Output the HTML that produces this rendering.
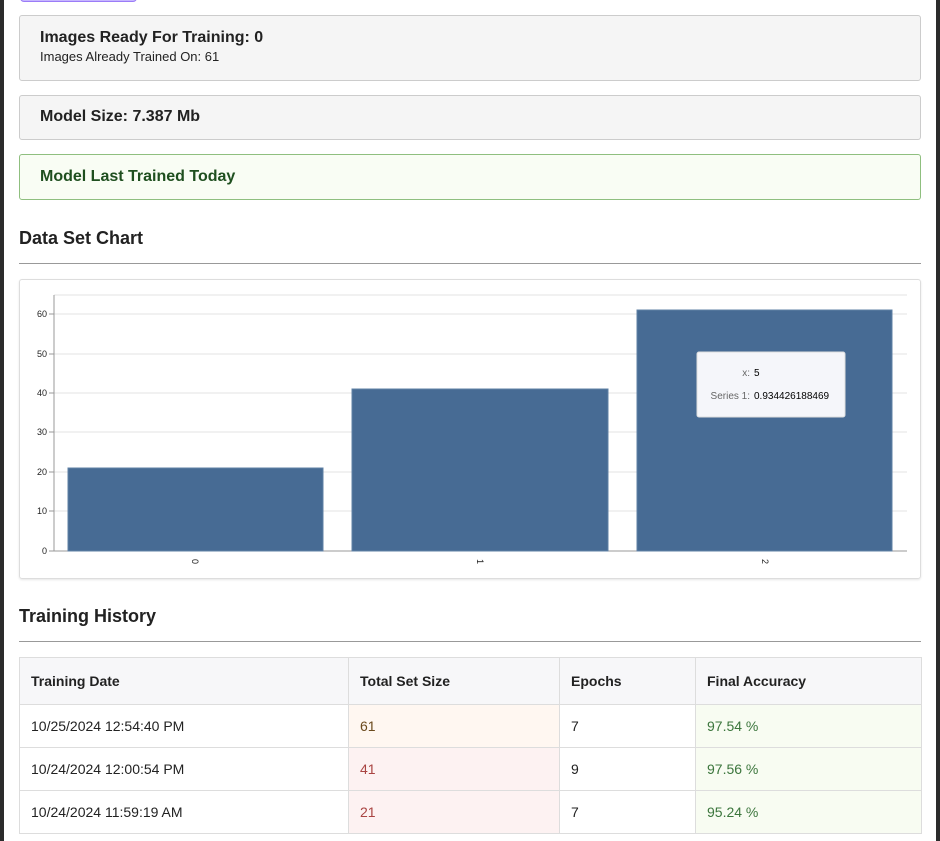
<!DOCTYPE html>
<html><head><meta charset="utf-8"><style>
*{box-sizing:border-box;margin:0;padding:0}
body{width:940px;height:841px;overflow:hidden;background:#fff;font-family:"Liberation Sans",Arial,sans-serif;color:#222;position:relative}
.edge{position:absolute;top:0;bottom:0;width:4px;background:#2b2b2b}
.btn{position:absolute;left:20px;top:-6px;width:117px;height:8px;border:1px solid #9b7cf7;border-radius:4px;background:#c6b6ff}
.panel{position:absolute;left:19px;width:902px;background:#f5f5f5;border:1px solid #ccc;border-radius:3px;padding-left:20px}
.panel b{font-size:16px;color:#222}
h3{position:absolute;left:19px;font-size:18px;font-weight:bold;color:#222}
.hr{position:absolute;left:19px;width:902px;height:1px;background:#999}
.card{position:absolute;left:19px;top:279px;width:902px;height:300px;border:1px solid #ddd;border-radius:3px;box-shadow:0 1px 2px rgba(0,0,0,.1)}
table{position:absolute;left:19px;top:657px;width:903px;border-collapse:collapse;font-size:14px}
td,th{border:1px solid #ddd;padding:0 11px;text-align:left}
th{height:47px;background:#f7f7f9;font-weight:bold}
td{height:43px}
</style></head><body>
<div class="edge" style="left:0"></div><div class="edge" style="right:0"></div>
<div class="btn"></div>
<div class="panel" style="top:15px;height:66px;padding-top:13px"><b>Images Ready For Training: 0</b><div style="font-size:13px;margin-top:2px">Images Already Trained On: 61</div></div>
<div class="panel" style="top:95px;height:45px;padding-top:12px"><b>Model Size: 7.387 Mb</b></div>
<div class="panel" style="top:154px;height:46px;padding-top:13px;background:#f9fdf4;border-color:#8fbf7f"><b style="color:#1f4f1f">Model Last Trained Today</b></div>
<h3 style="top:228px">Data Set Chart</h3>
<div class="hr" style="top:263px"></div>
<div class="card"></div>
<svg style="position:absolute;left:0;top:0" width="940" height="600" font-family="Liberation Sans,Arial,sans-serif" font-size="9">
<g stroke="#e3e3e3">
<line x1="54" x2="907" y1="314" y2="314"/><line x1="54" x2="907" y1="354" y2="354"/><line x1="54" x2="907" y1="393" y2="393"/><line x1="54" x2="907" y1="432" y2="432"/><line x1="54" x2="907" y1="472" y2="472"/><line x1="54" x2="907" y1="511" y2="511"/><line x1="54" x2="907" y1="295" y2="295"/>
</g>
<line x1="54" x2="54" y1="295" y2="551" stroke="#999"/>
<line x1="54" x2="907" y1="551" y2="551" stroke="#999"/>
<g fill="#476b94" stroke="#5f80a5">
<rect x="68" y="468" width="255" height="83"/><rect x="352" y="389" width="256" height="162"/><rect x="637" y="310" width="255" height="241"/>
</g>
<g fill="#222" text-anchor="end">
<text x="47" y="317">60</text><text x="47" y="357">50</text><text x="47" y="396">40</text><text x="47" y="435">30</text><text x="47" y="475">20</text><text x="47" y="514">10</text><text x="47" y="554">0</text>
</g>
<g stroke="#999"><line x1="49" x2="54" y1="314" y2="314"/><line x1="49" x2="54" y1="354" y2="354"/><line x1="49" x2="54" y1="393" y2="393"/><line x1="49" x2="54" y1="432" y2="432"/><line x1="49" x2="54" y1="472" y2="472"/><line x1="49" x2="54" y1="511" y2="511"/><line x1="49" x2="54" y1="551" y2="551"/></g>
<g fill="#222"><text transform="translate(192,559) rotate(90)">0</text><text transform="translate(477,559) rotate(90)">1</text><text transform="translate(762,559) rotate(90)">2</text></g>
<rect x="697" y="352" width="148" height="65" rx="2" fill="#f5f6fa" stroke="#ddd"/>
<text x="750" y="376" fill="#666" font-size="10" text-anchor="end">x:</text><text x="754" y="376" fill="#000" font-size="10">5</text>
<text x="750" y="399" fill="#666" font-size="10" text-anchor="end">Series 1:</text><text x="754" y="399" fill="#000" font-size="10">0.934426188469</text>
</svg>
<h3 style="top:606px">Training History</h3>
<div class="hr" style="top:641px"></div>
<table>
<tr><th style="width:329px">Training Date</th><th style="width:211px">Total Set Size</th><th style="width:136px">Epochs</th><th>Final Accuracy</th></tr>
<tr><td>10/25/2024 12:54:40 PM</td><td style="background:#fff7f1;color:#6b4a1d">61</td><td>7</td><td style="background:#f8fcf2;color:#3c763d">97.54 %</td></tr>
<tr><td>10/24/2024 12:00:54 PM</td><td style="background:#fdf2f2;color:#a94442">41</td><td>9</td><td style="background:#f8fcf2;color:#3c763d">97.56 %</td></tr>
<tr><td style="height:42px">10/24/2024 11:59:19 AM</td><td style="background:#fdf2f2;color:#a94442">21</td><td>7</td><td style="background:#f8fcf2;color:#3c763d">95.24 %</td></tr>
</table>
</body></html>
